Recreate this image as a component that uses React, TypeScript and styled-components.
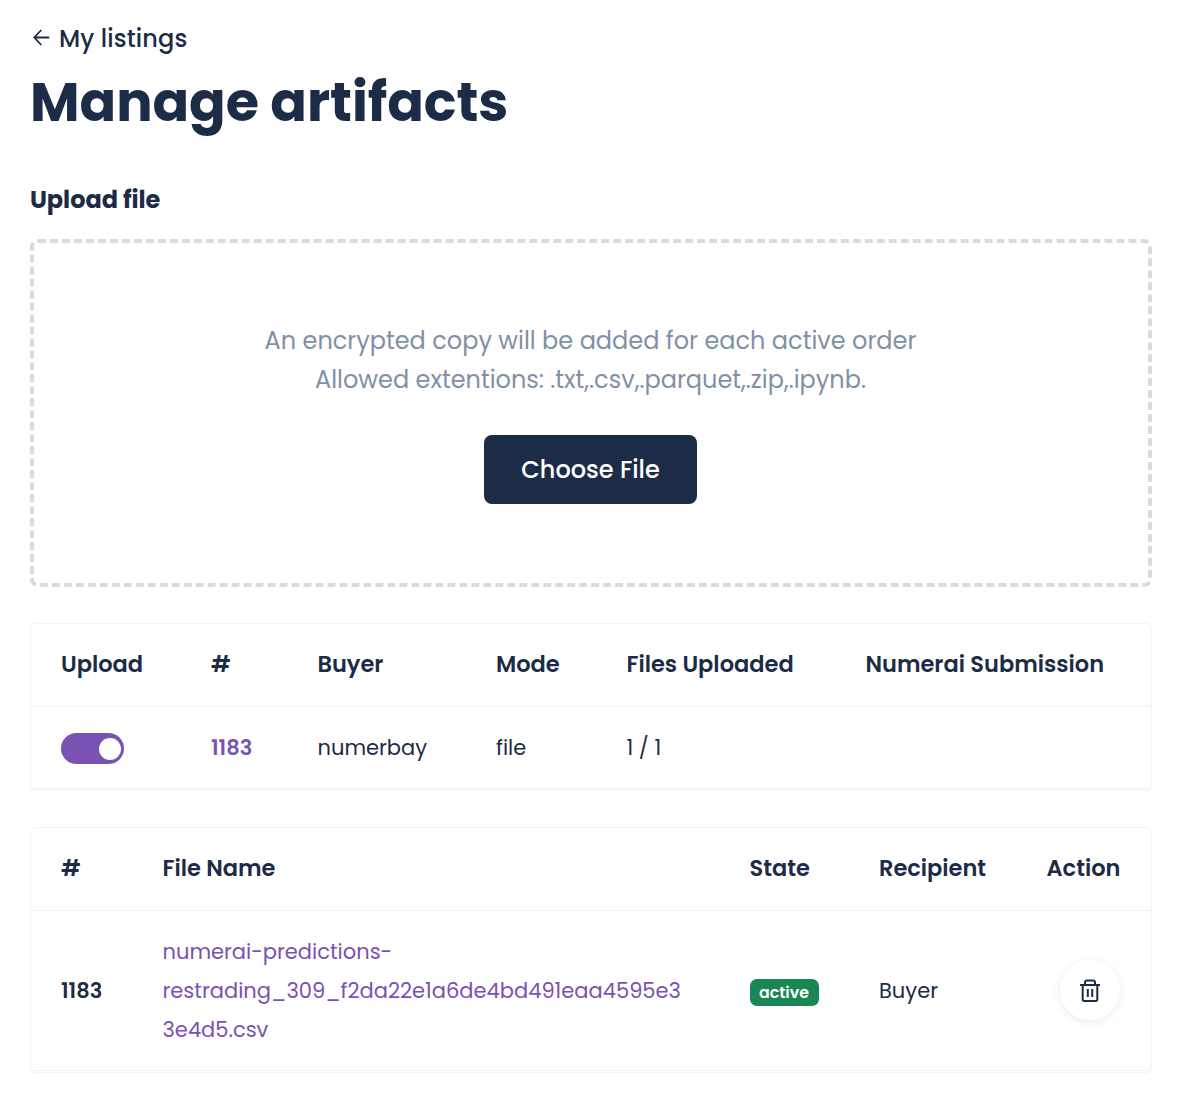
import React, { useState } from "react";
import styled, { createGlobalStyle } from "styled-components";

const ink = "#1c2b46";
const purple = "#7952b3";
const hairline = "#f3f3f4";

const GlobalStyle = createGlobalStyle`
  * { box-sizing: border-box; }
  body {
    margin: 0;
    background: #fff;
    color: ${ink};
    font-family: Poppins, Inter, "Open Sans", sans-serif;
    font-size: 21px;
    line-height: 39px;
  }
`;

const Page = styled.main`
  display: flex;
  flex-direction: column;
  width: 1183px;
  min-height: 1102px;
  padding: 19px 31px 0 30px;
`;

const BackLink = styled.a`
  display: flex;
  align-items: center;
  gap: 9px;
  padding-left: 3px;
  color: ${ink};
  font-size: 24px;
  font-weight: 500;
  letter-spacing: 0.15px;
  text-decoration: none;
  cursor: pointer;

  svg {
    margin-top: -3px;
  }
`;

const Title = styled.h1`
  margin: 10px 0 0;
  font-size: 54px;
  font-weight: 700;
  line-height: 68px;
  letter-spacing: -0.05px;
`;

const SectionTitle = styled.h2`
  margin: 44px 0 0;
  font-size: 24px;
  font-weight: 700;
  line-height: 39px;
  letter-spacing: -0.05px;
`;

const DropZone = styled.section`
  display: flex;
  flex-direction: column;
  align-items: center;
  height: 348px;
  margin-top: 20px;
  padding: 78px 1px 0 0;
  border: 4px dashed #dbdbdf;
  border-radius: 8px;
`;

const Hint = styled.p`
  display: flex;
  flex-direction: column;
  align-items: center;
  margin: 0;
  color: #8091a7;
  font-size: 24px;
`;

const ChooseButton = styled.button`
  width: 213px;
  height: 69px;
  margin-top: 36px;
  padding: 0;
  border: 0;
  border-radius: 8px;
  background: ${ink};
  color: #fff;
  font: inherit;
  font-size: 24px;
  font-weight: 500;
  cursor: pointer;
`;

const Table = styled.section`
  margin-top: 36px;
  padding-bottom: 1px;
  border: 1px solid ${hairline};
  border-radius: 6px;
`;

const Row = styled.div<{ $columns: string; $height: number }>`
  display: grid;
  grid-template-columns: ${(p) => p.$columns};
  align-items: center;
  height: ${(p) => p.$height}px;
  padding-left: 30px;
  border-bottom: 1px solid ${hairline};
  white-space: nowrap;
`;

const HeadRow = styled(Row)`
  padding-bottom: 2px;
  font-size: 22.5px;
  font-weight: 600;
`;

const Switch = styled.button`
  display: flex;
  align-items: center;
  justify-content: flex-end;
  width: 63px;
  height: 31px;
  margin-top: 2px;
  padding: 0 3.5px;
  border: 0;
  border-radius: 16px;
  background: ${purple};
  cursor: pointer;

  &[aria-checked="false"] {
    justify-content: flex-start;
    background: #c9ccd3;
  }
`;

const Knob = styled.span`
  width: 22px;
  height: 22px;
  border-radius: 50%;
  background: #fff;
`;

const OrderId = styled.span<{ $accent?: boolean }>`
  color: ${(p) => (p.$accent ? purple : ink)};
  font-weight: 600;
`;

const FileLink = styled.a`
  width: 526px;
  color: ${purple};
  white-space: normal;
  overflow-wrap: anywhere;
  cursor: pointer;
`;

const Badge = styled.span`
  display: flex;
  align-items: center;
  justify-content: center;
  width: 69px;
  height: 27px;
  margin-top: 4px;
  border-radius: 7px;
  background: #198754;
  color: #fff;
  font-size: 15.75px;
  font-weight: 600;
  line-height: 27px;
`;

const RoundButton = styled.button`
  display: flex;
  align-items: center;
  justify-content: center;
  width: 60px;
  height: 60px;
  margin: 0 0 2px 13px;
  padding: 0;
  border: 0;
  border-radius: 50%;
  background: #fff;
  box-shadow: 0 2px 10px rgba(28, 43, 70, 0.09);
  color: ${ink};
  cursor: pointer;
`;

const ArrowLeft = () => (
  <svg width="17" height="17" viewBox="0 0 17 17" fill="none" stroke="currentColor" strokeWidth="1.8">
    <path d="M8.3 1 1.3 8.5l7 7.5M1.3 8.5h15" />
  </svg>
);

const Trash = () => (
  <svg width="24" height="26" viewBox="0 0 24 26" fill="none" stroke="currentColor" strokeWidth="2" strokeLinejoin="round">
    <path d="M2 8h20" />
    <path d="M7 8V5.5Q7 3.6 9 3.6h6q2 0 2 1.9V8" />
    <path d="M4.7 8v14.3q0 1.7 1.7 1.7h11.2q1.7 0 1.7-1.7V8" />
    <path d="M9.8 12v8M14.2 12v8" />
  </svg>
);

const orderColumns = "150px 106.5px 178.5px 130.5px 239px 1fr";
const fileColumns = "101.5px 587px 129.5px 167.5px 1fr";

const orderHeads = ["Upload", "#", "Buyer", "Mode", "Files Uploaded", "Numerai Submission"];
const fileHeads = ["#", "File Name", "State", "Recipient", "Action"];

export default function App() {
  const [enabled, setEnabled] = useState(true);

  return (
    <>
      <GlobalStyle />
      <Page>
        <BackLink>
          <ArrowLeft />
          <span>My listings</span>
        </BackLink>
        <Title>Manage artifacts</Title>
        <SectionTitle>Upload file</SectionTitle>

        <DropZone>
          <Hint>
            <span>An encrypted copy will be added for each active order</span>
            <span>Allowed extentions: .txt,.csv,.parquet,.zip,.ipynb.</span>
          </Hint>
          <ChooseButton>Choose File</ChooseButton>
        </DropZone>

        <Table>
          <HeadRow $columns={orderColumns} $height={83}>
            {orderHeads.map((label) => (
              <span key={label}>{label}</span>
            ))}
          </HeadRow>
          <Row $columns={orderColumns} $height={82}>
            <Switch role="switch" aria-checked={enabled} onClick={() => setEnabled(!enabled)}>
              <Knob />
            </Switch>
            <OrderId $accent>1183</OrderId>
            <span>numerbay</span>
            <span>file</span>
            <span>1 / 1</span>
          </Row>
        </Table>

        <Table>
          <HeadRow $columns={fileColumns} $height={83}>
            {fileHeads.map((label) => (
              <span key={label}>{label}</span>
            ))}
          </HeadRow>
          <Row $columns={fileColumns} $height={160}>
            <OrderId>1183</OrderId>
            <FileLink>numerai-predictions-restrading_309_f2da22e1a6de4bd491eaa4595e33e4d5.csv</FileLink>
            <Badge>active</Badge>
            <span>Buyer</span>
            <RoundButton aria-label="Delete">
              <Trash />
            </RoundButton>
          </Row>
        </Table>
      </Page>
    </>
  );
}
